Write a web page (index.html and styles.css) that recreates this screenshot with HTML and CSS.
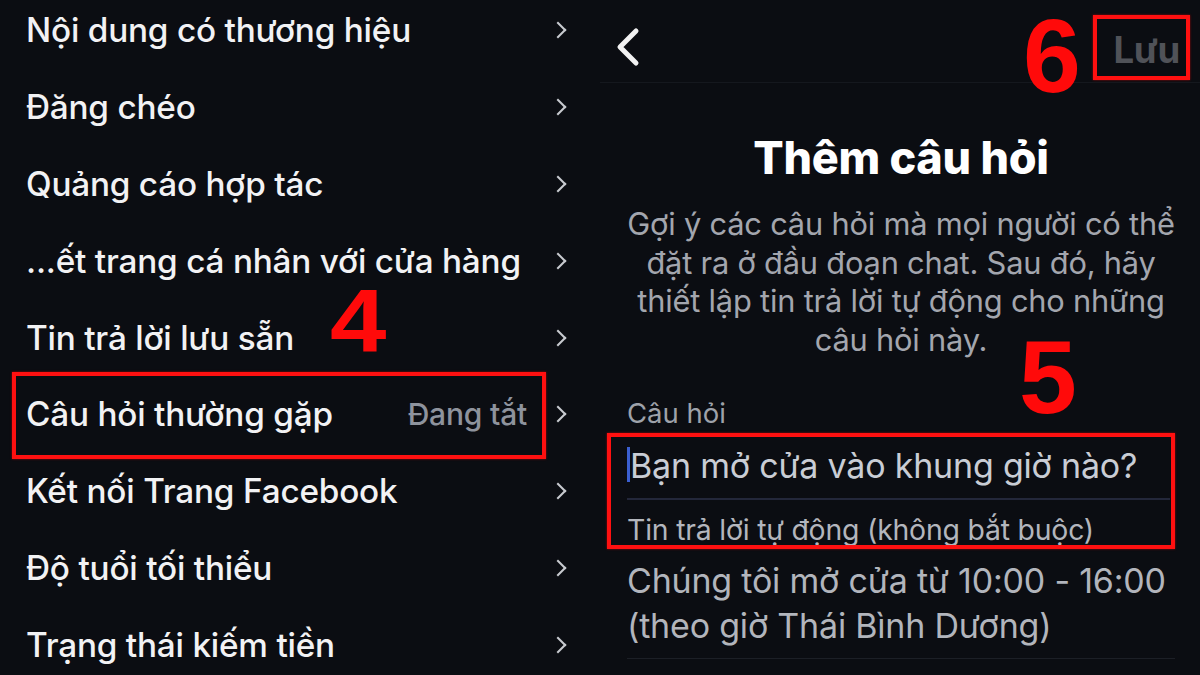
FILE: index.html
```html
<!DOCTYPE html>
<html lang="vi">
<head>
<meta charset="utf-8">
<link rel="stylesheet" href="styles.css">
</head>
<body>
<div class="page">
  <section class="left">
    <ul class="menu">
      <li class="row"><span class="label">Nội dung có thương hiệu</span><span class="chev"></span></li>
      <li class="row"><span class="label">Đăng chéo</span><span class="chev"></span></li>
      <li class="row"><span class="label">Quảng cáo hợp tác</span><span class="chev"></span></li>
      <li class="row"><span class="label">...ết trang cá nhân với cửa hàng</span><span class="chev"></span></li>
      <li class="row"><span class="label">Tin trả lời lưu sẵn</span><span class="chev"></span><span class="num num4">4</span></li>
      <li class="row boxed"><span class="label">Câu hỏi thường gặp</span><span class="value">Đang tắt</span><span class="chev"></span><span class="box box4"></span></li>
      <li class="row"><span class="label">Kết nối Trang Facebook</span><span class="chev"></span></li>
      <li class="row"><span class="label">Độ tuổi tối thiểu</span><span class="chev"></span></li>
      <li class="row"><span class="label">Trạng thái kiếm tiền</span><span class="chev"></span></li>
    </ul>
  </section>
  <section class="right">
    <header class="topbar">
      <svg class="back" width="28" height="40" viewBox="0 0 28 40"><path d="M22 4 L6 20 L22 36" fill="none" stroke="#f2f2f2" stroke-width="5" stroke-linecap="round" stroke-linejoin="round"/></svg>
      <div class="save">Lưu<span class="num num6">6</span><span class="box box6"></span></div>
    </header>
    <div class="content">
      <h1 class="title">Thêm câu hỏi</h1>
      <p class="desc">Gợi ý các câu hỏi mà mọi người có thể<br>đặt ra ở đầu đoạn chat. Sau đó, hãy<br>thiết lập tin trả lời tự động cho những<br>câu hỏi này.</p>
      <div class="field-label">Câu hỏi<span class="num num5">5</span></div>
      <div class="group">
        <div class="input"><span class="caret"></span>Bạn mở cửa vào khung giờ nào?</div>
        <div class="sub-label">Tin trả lời tự động (không bắt buộc)</div>
        <span class="box box5"></span>
      </div>
      <div class="answer">Chúng tôi mở cửa từ 10:00 - 16:00<br>(theo giờ Thái Bình Dương)</div>
    </div>
  </section>
</div>
</body>
</html>
```
FILE: styles.css
```css
* { box-sizing: border-box; }
html, body { margin: 0; padding: 0; }
body {
  width: 1200px;
  height: 675px;
  overflow: hidden;
  background: #0b0d12;
  font-family: Inter, "Noto Sans", "DejaVu Sans", sans-serif;
  color: #f0f0f2;
}
.page {
  display: flex;
  width: 1200px;
  height: 675px;
}
.left {
  width: 600px;
  flex: none;
}
.menu {
  list-style: none;
  margin: -8px 0 0 0;
  padding: 0;
}
.row {
  position: relative;
  display: flex;
  align-items: center;
  height: 76.8px;
  padding: 0 32px 0 26px;
}
.label {
  font-size: 33.3px;
  font-weight: 500;
  color: #f2f2f4;
  letter-spacing: -0.2px;
  flex: 1;
  white-space: nowrap;
}
.value {
  font-size: 30px;
  font-weight: 500;
  color: #8e939d;
  margin-right: 25px;
  letter-spacing: -0.2px;
}
.chev {
  width: 12px;
  height: 12px;
  border-right: 2.6px solid #c9cbd0;
  border-top: 2.6px solid #c9cbd0;
  transform: rotate(45deg);
  margin-right: 4px;
  flex: none;
}
.num {
  position: absolute;
  color: #ff0a0a;
  font-family: "Liberation Sans", Arial, sans-serif;
  font-weight: 700;
  line-height: 1;
}
.num4 {
  left: 330px;
  top: -10px;
  font-size: 89px;
  line-height: 0.72;
  transform: scaleX(1.14);
  transform-origin: left center;
}
.box {
  position: absolute;
  border: 4px solid #ff1010;
  box-shadow: 0 0 2px rgba(255,0,0,0.6);
  pointer-events: none;
}
.box4 {
  left: 12px;
  right: 54px;
  top: -4px;
  bottom: -6px;
}
.right {
  flex: 1;
  display: flex;
  flex-direction: column;
}
.topbar {
  height: 83px;
  display: flex;
  align-items: flex-start;
  justify-content: space-between;
  padding: 27px 20px 0 14px;
  border-bottom: 1px solid #15181e;
}
.save {
  position: relative;
  font-size: 36.5px;
  font-weight: 700;
  color: #505258;
  line-height: 44px;
  margin-top: 1px;
  letter-spacing: -0.3px;
}
.num6 {
  right: calc(100% + 33px);
  top: -24px;
  font-size: 104px;
}
.box6 {
  left: -20px;
  right: -10px;
  top: -13px;
  bottom: -8px;
}
.content {
  display: flex;
  flex-direction: column;
  padding: 0 25px 0 27px;
}
.title {
  margin: 50px 0 0 0;
  text-align: center;
  font-size: 45px;
  font-weight: 800;
  color: #ffffff;
  line-height: 50px;
  letter-spacing: -0.3px;
}
.desc {
  margin: 22px 0 0 0;
  text-align: center;
  font-size: 30.8px;
  line-height: 38.5px;
  color: #a3a6ae;
  white-space: nowrap;
  letter-spacing: -0.2px;
}
.field-label {
  position: relative;
  margin-top: 38px;
  font-size: 27.5px;
  color: #9ea2aa;
  line-height: 32px;
}
.num5 {
  left: 392px;
  top: -72px;
  font-size: 104px;
}
.group {
  position: relative;
  margin-top: 19px;
  display: flex;
  flex-direction: column;
}
.input {
  position: relative;
  font-size: 34px;
  color: #c9cdd5;
  line-height: 36px;
  padding: 0 0 14px 3px;
  border-bottom: 2px solid #23273a;
  margin-right: 5px;
  letter-spacing: -0.2px;
}
.caret {
  position: absolute;
  left: 0;
  top: -1px;
  width: 3px;
  height: 35px;
  background: #3b5fd0;
}
.sub-label {
  font-size: 28.4px;
  color: #b3b6bd;
  line-height: 32px;
  margin-top: 14px;
  letter-spacing: -0.2px;
}
.box5 {
  left: -20px;
  right: 0;
  top: -15px;
  bottom: -3px;
}
.answer {
  margin-top: 12px;
  font-size: 34px;
  line-height: 45px;
  color: #b2b5bc;
  padding-bottom: 10px;
  border-bottom: 1px solid #1c1f26;
  white-space: nowrap;
  letter-spacing: -0.2px;
}
```
